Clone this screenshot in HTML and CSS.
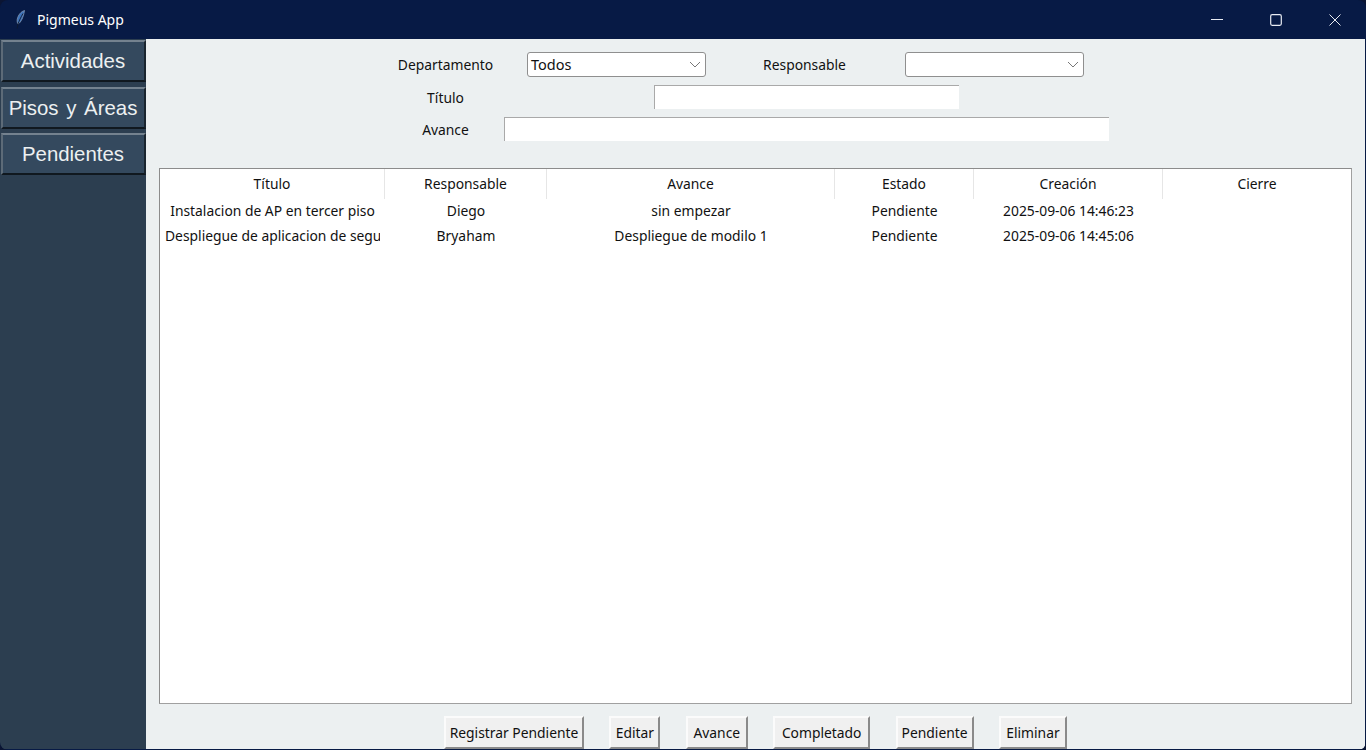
FILE: index.html
```html
<!DOCTYPE html>
<html lang="es">

<head>
  <meta charset="UTF-8">
  <meta name="viewport" content="width=device-width, initial-scale=1.0">
  <title>Pigmeus App</title>
  <link rel="stylesheet" href="styles.css">
</head>

<body>
  <div class="window">
    <!-- barra de titulo -->
    <header class="titlebar">
      <svg class="app-icon" width="10" height="19" viewBox="0 0 10 19">
        <path d="M8.500 0.500C5 1.500 2 5 1.200 9.500C1 11.500 1.300 13 2 14C5 12.500 7.500 7 8.500 0.500Z" fill="#3d74bd" stroke="#8d9db5" stroke-width="0.700" />
        <path d="M7 3.500C5 7 3 11 2 14L1.200 18.500" fill="none" stroke="#0f1a2e" stroke-width="0.900" />
      </svg>
      <span class="app-name">Pigmeus App</span>
      <div class="win-controls">
        <svg width="12" height="12" viewBox="0 0 12 12"><path d="M0 5.500H12" stroke="#e8ebf2" stroke-width="1" /></svg>
        <svg width="12" height="12" viewBox="0 0 12 12"><rect x="0.700" y="0.700" width="10.600" height="10.600" rx="1.500" fill="none" stroke="#e8ebf2" stroke-width="1.200" /></svg>
        <svg width="12" height="12" viewBox="0 0 12 12"><path d="M0.500 0.500L11.500 11.500M11.500 0.500L0.500 11.500" stroke="#e8ebf2" stroke-width="1" /></svg>
      </div>
    </header>

    <div class="content">
      <!-- menu lateral -->
      <nav class="sidebar">
        <a class="side-btn">Actividades</a>
        <a class="side-btn">Pisos y Áreas</a>
        <a class="side-btn">Pendientes</a>
      </nav>

      <main class="main">
        <!-- filtros -->
        <section class="filters">
          <label class="lbl">Departamento</label>
          <div class="combo">
            <span>Todos</span>
            <svg width="12" height="7" viewBox="0 0 12 7"><path d="M1 1L6 6L11 1" fill="none" stroke="#777" stroke-width="1" /></svg>
          </div>
          <label class="lbl">Responsable</label>
          <div class="combo">
            <span></span>
            <svg width="12" height="7" viewBox="0 0 12 7"><path d="M1 1L6 6L11 1" fill="none" stroke="#777" stroke-width="1" /></svg>
          </div>

          <label class="lbl">Título</label>
          <div class="entry entry-short"></div>

          <label class="lbl">Avance</label>
          <div class="entry entry-long"></div>
        </section>

        <!-- tabla -->
        <section class="tree">
          <div class="row head">
            <div class="cell">Título</div>
            <div class="cell">Responsable</div>
            <div class="cell">Avance</div>
            <div class="cell">Estado</div>
            <div class="cell">Creación</div>
            <div class="cell">Cierre</div>
          </div>
          <div class="row">
            <div class="cell">Instalacion de AP en tercer piso</div>
            <div class="cell">Diego</div>
            <div class="cell">sin empezar</div>
            <div class="cell">Pendiente</div>
            <div class="cell">2025-09-06 14:46:23</div>
            <div class="cell"></div>
          </div>
          <div class="row">
            <div class="cell clip">Despliegue de aplicacion de segu</div>
            <div class="cell">Bryaham</div>
            <div class="cell">Despliegue de modilo 1</div>
            <div class="cell">Pendiente</div>
            <div class="cell">2025-09-06 14:45:06</div>
            <div class="cell"></div>
          </div>
        </section>

        <!-- acciones -->
        <footer class="actions">
          <button class="btn btn-registrar">Registrar Pendiente</button>
          <button class="btn btn-editar">Editar</button>
          <button class="btn btn-avance">Avance</button>
          <button class="btn btn-completado">Completado</button>
          <button class="btn btn-pendiente">Pendiente</button>
          <button class="btn btn-eliminar">Eliminar</button>
        </footer>
      </main>
    </div>
  </div>
</body>

</html>
```

FILE: styles.css
```css
* {
  margin: 0;
  padding: 0;
  box-sizing: border-box;
}

html,
body {
  width: 1366px;
  height: 750px;
  overflow: hidden;
  background-color: #0b1533;
}

body {
  font-family: "Noto Sans", "Open Sans", sans-serif;
  font-size: 13.850px;
  color: #111;
}

.window {
  width: 1366px;
  height: 750px;
  background-color: #071a45;
  border-radius: 8px;
  overflow: hidden;
  display: flex;
  flex-direction: column;
  padding: 0 1px 1px 0;
}

/* barra de titulo */
.titlebar {
  height: 39px;
  flex: none;
  display: flex;
  align-items: center;
  color: #fff;
  font-size: 14px;
  padding-left: 16px;
}

.app-icon {
  margin-right: 11px;
  margin-top: -1px;
}

.win-controls {
  margin-left: auto;
  display: flex;
  align-items: center;
  gap: 47px;
  padding-right: 24px;
}

.content {
  flex: 1;
  display: flex;
  min-height: 0;
}

/* menu lateral */
.sidebar {
  width: 146px;
  flex: none;
  background-color: #2c3e50;
  padding: 1px 0 0 1px;
  display: flex;
  flex-direction: column;
  gap: 4.500px;
}

.side-btn {
  height: 42px;
  display: flex;
  align-items: center;
  justify-content: center;
  background-color: #34495e;
  color: #ecf0f1;
  font-family: "Liberation Sans", sans-serif;
  font-size: 20.400px;
  word-spacing: 2px;
  padding: 1px 1px 0 0;
  border: 2px solid;
  border-color: #74828f #1a252f #10181f #5d6b78;
}

/* contenido */
.main {
  flex: 1;
  background-color: #ecf0f1;
  display: flex;
  flex-direction: column;
  padding: 13px 13px 0 13px;
}

.filters {
  display: grid;
  grid-template-columns: 117px 225px 151px 229px;
  grid-template-rows: 25px 24px 24px;
  row-gap: 8px;
  margin-left: 228px;
  height: 89px;
  flex: none;
}

.lbl {
  display: flex;
  align-items: center;
  justify-content: center;
}

.combo {
  width: 179px;
  height: 25px;
  justify-self: center;
  background-color: #fff;
  border: 1px solid #8f8f8f;
  border-radius: 3px;
  display: flex;
  align-items: center;
  justify-content: space-between;
  padding: 0 4px 2px 3px;
  font-size: 14.500px;
}

.combo svg {
  margin-top: 2px;
}

.entry {
  height: 24px;
  background-color: #fff;
  border-top: 1px solid #a9a9a9;
  border-left: 1px solid #a9a9a9;
  justify-self: center;
  grid-column: 2 / 5;
}

.entry-short {
  width: 305px;
}

.entry-long {
  width: 605px;
}

/* tabla */
.tree {
  flex: 1;
  margin-top: 27px;
  background-color: #fff;
  border: 1px solid #8c8c8c;
  border-color: #8c8c8c #a0a0a0 #a0a0a0 #8c8c8c;
  min-height: 0;
}

.row {
  display: grid;
  grid-template-columns: 225px 162px 288px 139px 189px 1fr;
  height: 25px;
  padding-bottom: 2px;
}

.head {
  height: 30px;
  padding-bottom: 0;
}

.cell {
  display: flex;
  align-items: center;
  justify-content: center;
  white-space: nowrap;
  overflow: hidden;
}

.head .cell {
  padding-bottom: 2px;
  border-right: 1px solid #e6e6e6;
}

.head .cell:last-child {
  border-right: none;
}

.clip {
  justify-content: flex-start;
  padding-left: 5px;
  margin-right: 5px;
}

/* acciones */
.actions {
  height: 45px;
  flex: none;
  display: flex;
  justify-content: center;
  align-items: flex-end;
  gap: 25.400px;
}

.btn {
  height: 33px;
  padding: 0;
  font: inherit;
  color: #111;
  background-color: #f0f0f0;
  border: 2px solid;
  border-color: #fbfbfb #8a8a8a #8a8a8a #fbfbfb;
}

.btn-registrar {
  width: 140px;
}

.btn-editar {
  width: 51px;
}

.btn-avance {
  width: 62px;
}

.btn-completado {
  width: 97px;
}

.btn-pendiente {
  width: 78px;
}

.btn-eliminar {
  width: 68px;
}
```
